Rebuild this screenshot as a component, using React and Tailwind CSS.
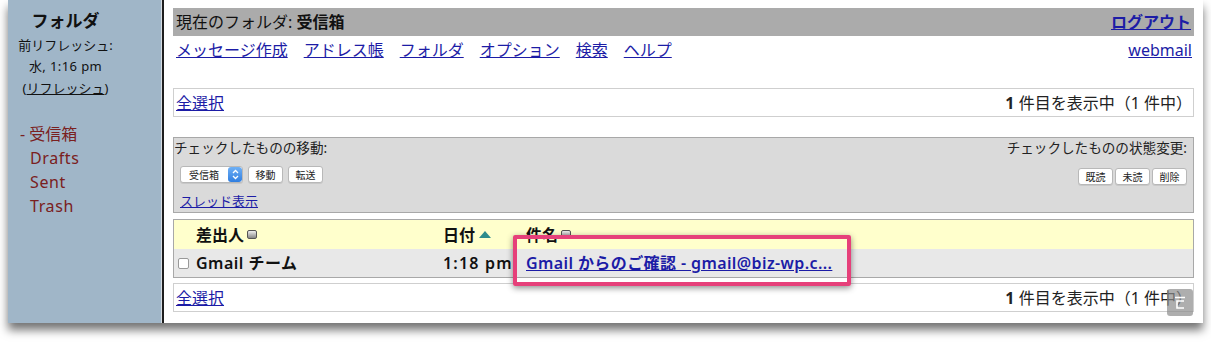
import React from "react";

const font = { fontFamily: '"Noto Sans", "Noto Sans CJK JP", sans-serif' };

function Btn({ text }) {
  return (
    <span className="inline-flex h-[17px] w-[35px] items-center justify-center rounded-[3px] border border-[#b8b8b8] bg-white text-[10px] leading-none text-[#222] shadow-[0_1px_0_rgba(0,0,0,0.08)]">
      {text}
    </span>
  );
}

function SortBox() {
  return (
    <span className="ml-[3px] inline-block h-[9px] w-[10px] rounded-[2px] border border-[#555] bg-gradient-to-b from-[#eee] to-[#888]" />
  );
}

function SelectFolder() {
  return (
    <span className="inline-flex h-[17px] w-[63px] items-center overflow-hidden rounded-[3px] border border-[#b8b8b8] bg-white shadow-[0_1px_0_rgba(0,0,0,0.08)]">
      <span className="flex-1 pl-[8px] text-[10px] leading-none text-[#222]">受信箱</span>
      <span className="flex h-full w-[14px] items-center justify-center rounded-[3px] bg-gradient-to-b from-[#6fb0f5] to-[#2f7ee0]">
        <svg width="7" height="11" viewBox="0 0 7 11">
          <path d="M1 4 L3.5 1.5 L6 4 M1 7 L3.5 9.5 L6 7" stroke="white" strokeWidth="1.3" fill="none" />
        </svg>
      </span>
    </span>
  );
}

function CountBox() {
  return (
    <div className="flex h-[29px] items-center justify-between border border-[#cfcfcf] pl-[2px] pr-[1px] text-[16px] leading-none">
      <a className="text-[#1c1ca6] underline">全選択</a>
      <span className="text-[#222]">
        <b>1</b> 件目を表示中（1 件中）
      </span>
    </div>
  );
}

export default function App() {
  return (
    <div className="relative h-[342px] w-[1211px] overflow-hidden bg-white" style={font}>
      <div className="ml-[8px] flex h-[323px] w-[1195px] shadow-[0_7px_9px_rgba(0,0,0,0.55)]">
        {/* sidebar */}
        <aside className="w-[153px] bg-[#a0b6c8] text-[#111]">
          <div className="w-[115px] pt-[10px] text-center">
            <div className="h-[22px] text-[17px] font-bold leading-[22px]">フォルダ</div>
            <div className="mt-[3px] h-[21px] text-[13px] leading-[21px]">前リフレッシュ:</div>
            <div className="h-[21px] text-[13px] leading-[21px] tracking-[0.4px]">水, 1:16 pm</div>
            <div className="h-[22px] text-[13px] leading-[22px]">
              (<span className="underline">リフレッシュ</span>)
            </div>
          </div>
          <ul className="mt-[23px] pl-[12px] text-[16px] leading-[24px] text-[#7a2020]">
            <li>- 受信箱</li>
            <li className="pl-[10px] tracking-[0.6px]">Drafts</li>
            <li className="pl-[10px] tracking-[0.6px]">Sent</li>
            <li className="pl-[10px] tracking-[0.6px]">Trash</li>
          </ul>
        </aside>
        <div className="w-[1px] bg-[#d6dce2]" />
        <div className="w-[2px] bg-[#1e1e1e]" />

        {/* main */}
        <main className="flex-1 bg-white px-[9px] pt-[8px]">
          <div className="flex h-[28px] items-center justify-between bg-[#ababab] px-[3px] text-[16px] leading-none text-[#111]">
            <span>
              現在のフォルダ: <b>受信箱</b>
            </span>
            <a className="font-bold text-[#1c1ca6] underline">ログアウト</a>
          </div>

          <div className="flex h-[28px] items-center justify-between pl-[3px] pr-[2px] text-[16px] leading-none text-[#1c1ca6]">
            <div className="flex gap-[16px]">
              <a className="underline">メッセージ作成</a>
              <a className="underline">アドレス帳</a>
              <a className="underline">フォルダ</a>
              <a className="underline">オプション</a>
              <a className="underline">検索</a>
              <a className="underline">ヘルプ</a>
            </div>
            <a className="underline">webmail</a>
          </div>

          <div className="mt-[24px]">
            <CountBox />
          </div>

          {/* move / status box */}
          <div className="mt-[20px] flex h-[76px] justify-between border border-[#a8a8a8] bg-[#dadada] text-[13.6px] text-[#222]">
            <div className="flex flex-col">
              <div className="h-[20px] leading-[20px]">チェックしたものの移動:</div>
              <div className="mt-[8px] flex gap-[5px] pl-[6px]">
                <SelectFolder />
                <Btn text="移動" />
                <Btn text="転送" />
              </div>
              <div className="mt-[9px] h-[18px] pl-[6px] text-[13px] leading-[18px]">
                <a className="text-[#1c1ca6] underline">スレッド表示</a>
              </div>
            </div>
            <div className="flex flex-col items-end pr-[6px]">
              <div className="h-[20px] leading-[20px]">チェックしたものの状態変更:</div>
              <div className="mt-[10px] flex gap-[2px]">
                <Btn text="既読" />
                <Btn text="未読" />
                <Btn text="削除" />
              </div>
            </div>
          </div>

          {/* message table */}
          <div className="mt-[6px] border border-[#a8a8a8] text-[16px] font-bold leading-none text-[#111]">
            <div className="grid h-[29px] grid-cols-[22px_247px_83px_1fr] items-center bg-[#ffffcc]">
              <span />
              <span className="flex items-center">
                差出人
                <SortBox />
              </span>
              <span className="flex items-center">
                日付
                <svg className="ml-[4px]" width="12" height="7" viewBox="0 0 12 7">
                  <path d="M0 7 L6 0 L12 7 Z" fill="#2e8c8c" />
                </svg>
              </span>
              <span className="flex items-center">
                件名
                <SortBox />
              </span>
            </div>
            <div className="grid h-[28px] grid-cols-[22px_247px_83px_1fr] items-center bg-[#e8e8e8]">
              <span className="pl-[4px]">
                <span className="block h-[11px] w-[11px] rounded-[2px] border border-[#999] bg-white" />
              </span>
              <span className="font-semibold tracking-[0.5px]">Gmail チーム</span>
              <span className="whitespace-nowrap font-semibold tracking-[1.2px]">1:18 pm</span>
              <a className="font-semibold tracking-[0.4px] text-[#1c1ca6] underline">
                Gmail からのご確認 - gmail@biz-wp.c...
              </a>
            </div>
          </div>

          <div className="mt-[5px]">
            <CountBox />
          </div>
        </main>
      </div>

      {/* highlight */}
      <div className="absolute left-[513px] top-[235px] h-[51px] w-[338px] rounded-[2px] border-[4px] border-[#e6407a] shadow-[0_2px_6px_rgba(0,0,0,0.45)]" />

      {/* scroll-to-top */}
      <div className="absolute left-[1167px] top-[289px] flex h-[27px] w-[26px] items-center justify-center rounded-[3px] bg-[rgba(140,140,140,0.7)]">
        <svg width="12" height="14" viewBox="0 0 12 14">
          <path d="M1 1.5 H11 M10 5 H3 V12 H10" stroke="white" strokeWidth="1.6" fill="none" />
        </svg>
      </div>
    </div>
  );
}
